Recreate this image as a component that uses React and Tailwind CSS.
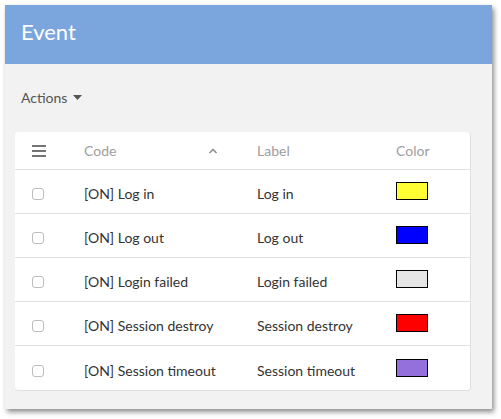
// Event list screen: title bar, actions menu and a grid of event codes

const EVENTS = [
  { code: "[ON] Log in", label: "Log in", color: "bg-[#ffff33]" },
  { code: "[ON] Log out", label: "Log out", color: "bg-[#0000ff]" },
  { code: "[ON] Login failed", label: "Login failed", color: "bg-[#e5e5e5]" },
  { code: "[ON] Session destroy", label: "Session destroy", color: "bg-[#ff0000]" },
  { code: "[ON] Session timeout", label: "Session timeout", color: "bg-[#9370db]" },
];

function MenuIcon() {
  return (
    <svg width="14" height="12" viewBox="0 0 14 12" aria-hidden="true">
      <rect x="0" y="0" width="14" height="2" fill="#757575" />
      <rect x="0" y="5" width="14" height="2" fill="#757575" />
      <rect x="0" y="10" width="14" height="2" fill="#757575" />
    </svg>
  );
}

function SortUp() {
  return (
    <svg width="10" height="6" viewBox="0 0 10 6" aria-hidden="true">
      <path d="M1.5 5 L5 1.5 L8.5 5" fill="none" stroke="#8a8a8a" strokeWidth="1.5" />
    </svg>
  );
}

export default function App() {
  return (
    <div className="w-[501px] h-[419px] bg-white pt-[5px] pl-[5px] font-['Lato','Liberation_Sans',sans-serif]">
      <div className="w-[487px] h-[404px] bg-[#f2f2f2] shadow-[2px_3px_5px_rgba(0,0,0,0.45)] flex flex-col">
        {/* title bar */}
        <div className="h-[59px] bg-[#7ba6dd] flex items-center pl-4 pb-[5px]">
          <h1 className="text-[22px] text-white leading-none">Event</h1>
        </div>

        {/* actions */}
        <div className="h-[68px] flex items-center pl-4 pb-[2px]">
          <button className="flex items-center gap-[6px] text-[14px] text-[#555]">
            Actions
            <svg width="9" height="5" viewBox="0 0 9 5" aria-hidden="true">
              <path d="M0 0 H9 L4.5 5 Z" fill="#555" />
            </svg>
          </button>
        </div>

        {/* grid */}
        <div className="ml-[10px] w-[456px] bg-white rounded border border-[#e0e0e0] border-t-0 border-l-0">
          <div className="flex h-[38px] border-b border-[#e0e0e0] text-[14px] text-[#9e9e9e]">
            <div className="w-[48px] flex items-center pl-[17px]">
              <MenuIcon />
            </div>
            <div className="w-[174px] flex items-center pl-[21px] pr-[19px] justify-between">
              <span>Code</span>
              <SortUp />
            </div>
            <div className="w-[138px] flex items-center pl-[20px]">Label</div>
            <div className="flex-1 flex items-center pl-[21px]">Color</div>
          </div>

          {EVENTS.map((ev, i) => (
            <div
              key={ev.code}
              className={`flex h-[44px] text-[14px] text-[#333] ${
                i < EVENTS.length - 1 ? "border-b border-[#e0e0e0]" : ""
              }`}
            >
              <div className="w-[48px] flex items-center pl-[17px] pt-[5px]">
                <span className="w-[12px] h-[12px] rounded-[3px] border border-[#bdbdbd] bg-white" />
              </div>
              <div className="w-[174px] flex items-center pl-[21px] pt-[4px]">{ev.code}</div>
              <div className="w-[138px] flex items-center pl-[20px] pt-[4px]">{ev.label}</div>
              <div className="flex-1 flex items-center pl-[21px] pb-[1px]">
                <span className={`w-[32px] h-[18px] border border-black ${ev.color}`} />
              </div>
            </div>
          ))}
        </div>
      </div>
    </div>
  );
}
